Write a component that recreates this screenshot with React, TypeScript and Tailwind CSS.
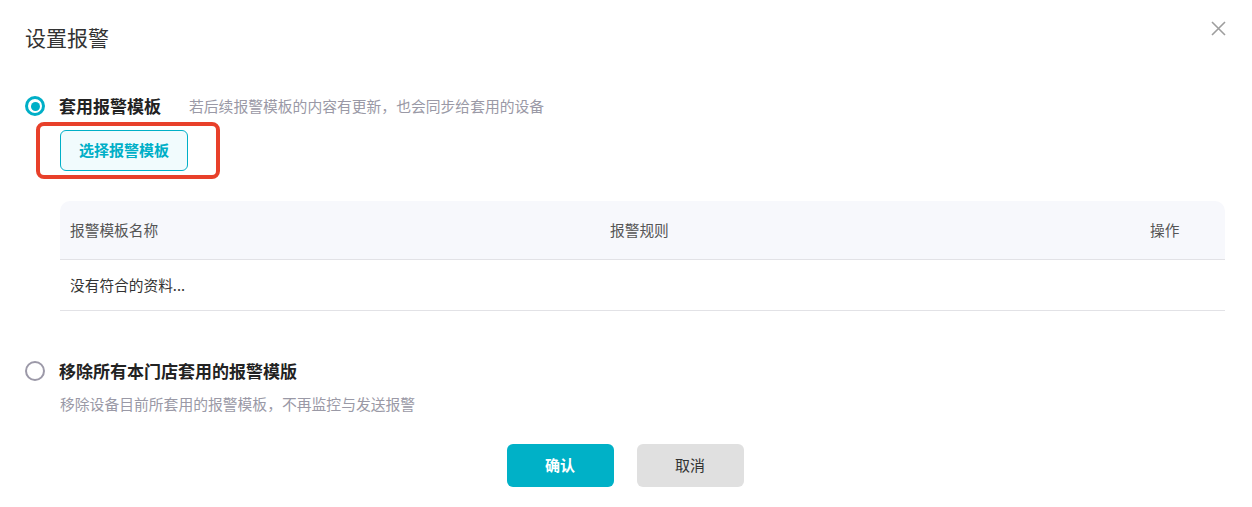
import React from "react";

const font = { fontFamily: '"Noto Sans CJK SC", "Noto Sans", sans-serif' };

const Radio: React.FC<{ checked?: boolean }> = ({ checked }) =>
  checked ? (
    <span className="flex h-[20px] w-[20px] items-center justify-center rounded-full border-[3px] border-[#00afc7]">
      <span className="h-[9px] w-[9px] rounded-full bg-[#00afc7]" />
    </span>
  ) : (
    <span className="h-[20px] w-[20px] rounded-full border-2 border-[#9c99a8]" />
  );

const App: React.FC = () => {
  return (
    <div
      className="relative h-[507px] w-full bg-white px-[25px] pt-[24px] text-[#333]"
      style={font}
    >
      {/* Header */}
      <h2 className="text-[21px] leading-[26px] text-[#333]">设置报警</h2>
      <button className="absolute right-[26px] top-[21px] text-[#9e9e9e]">
        <svg width="15" height="15" viewBox="0 0 15 15" fill="none">
          <path d="M1 1L14 14M14 1L1 14" stroke="currentColor" strokeWidth="1.6" />
        </svg>
      </button>

      {/* Option 1 */}
      <div className="mt-[44px] flex h-[24px] items-center">
        <Radio checked />
        <span className="ml-[14px] text-[17px] font-bold text-[#222]">套用报警模板</span>
        <span className="ml-[28px] text-[14.8px] text-[#9a99a6]">
          若后续报警模板的内容有更新，也会同步给套用的设备
        </span>
      </div>

      <div className="ml-[11px] mt-[4px] h-[57px] w-[184px] rounded-[8px] border-4 border-[#e8402a] pl-[20px] pt-[4px]">
        <button className="flex h-[41px] w-[128px] items-center justify-center rounded-[6px] border border-[#00afc7] bg-[#f1fbfd] text-[15px] font-bold text-[#00afc7]">
          选择报警模板
        </button>
      </div>

      {/* Table */}
      <div className="ml-[35px] mt-[22px] w-[1165px] text-[14.7px]">
        <div className="grid h-[59px] grid-cols-[540px_1fr_75px] items-center rounded-t-[10px] border-b border-[#e2e2e6] bg-[#f7f8fc] pl-[10px] text-[#555]">
          <span>报警模板名称</span>
          <span>报警规则</span>
          <span>操作</span>
        </div>
        <div className="flex h-[51px] items-center border-b border-[#e2e2e6] pl-[10px] text-[#333]">
          没有符合的资料...
        </div>
      </div>

      {/* Option 2 */}
      <div className="mt-[48px] flex h-[24px] items-center">
        <Radio />
        <span className="ml-[14px] text-[17px] font-bold text-[#222]">
          移除所有本门店套用的报警模版
        </span>
      </div>
      <p className="ml-[35px] mt-[11px] text-[14.8px] leading-[20px] text-[#9a99a6]">
        移除设备目前所套用的报警模板，不再监控与发送报警
      </p>

      {/* Footer */}
      <div className="mt-[30px] flex justify-center gap-[23px] pr-[2px]">
        <button className="h-[43px] w-[107px] rounded-[6px] bg-[#00b1c7] text-[15px] font-bold text-white">
          确认
        </button>
        <button className="h-[43px] w-[107px] rounded-[6px] bg-[#e0e0e0] text-[15px] text-[#333]">
          取消
        </button>
      </div>
    </div>
  );
};

export default App;
